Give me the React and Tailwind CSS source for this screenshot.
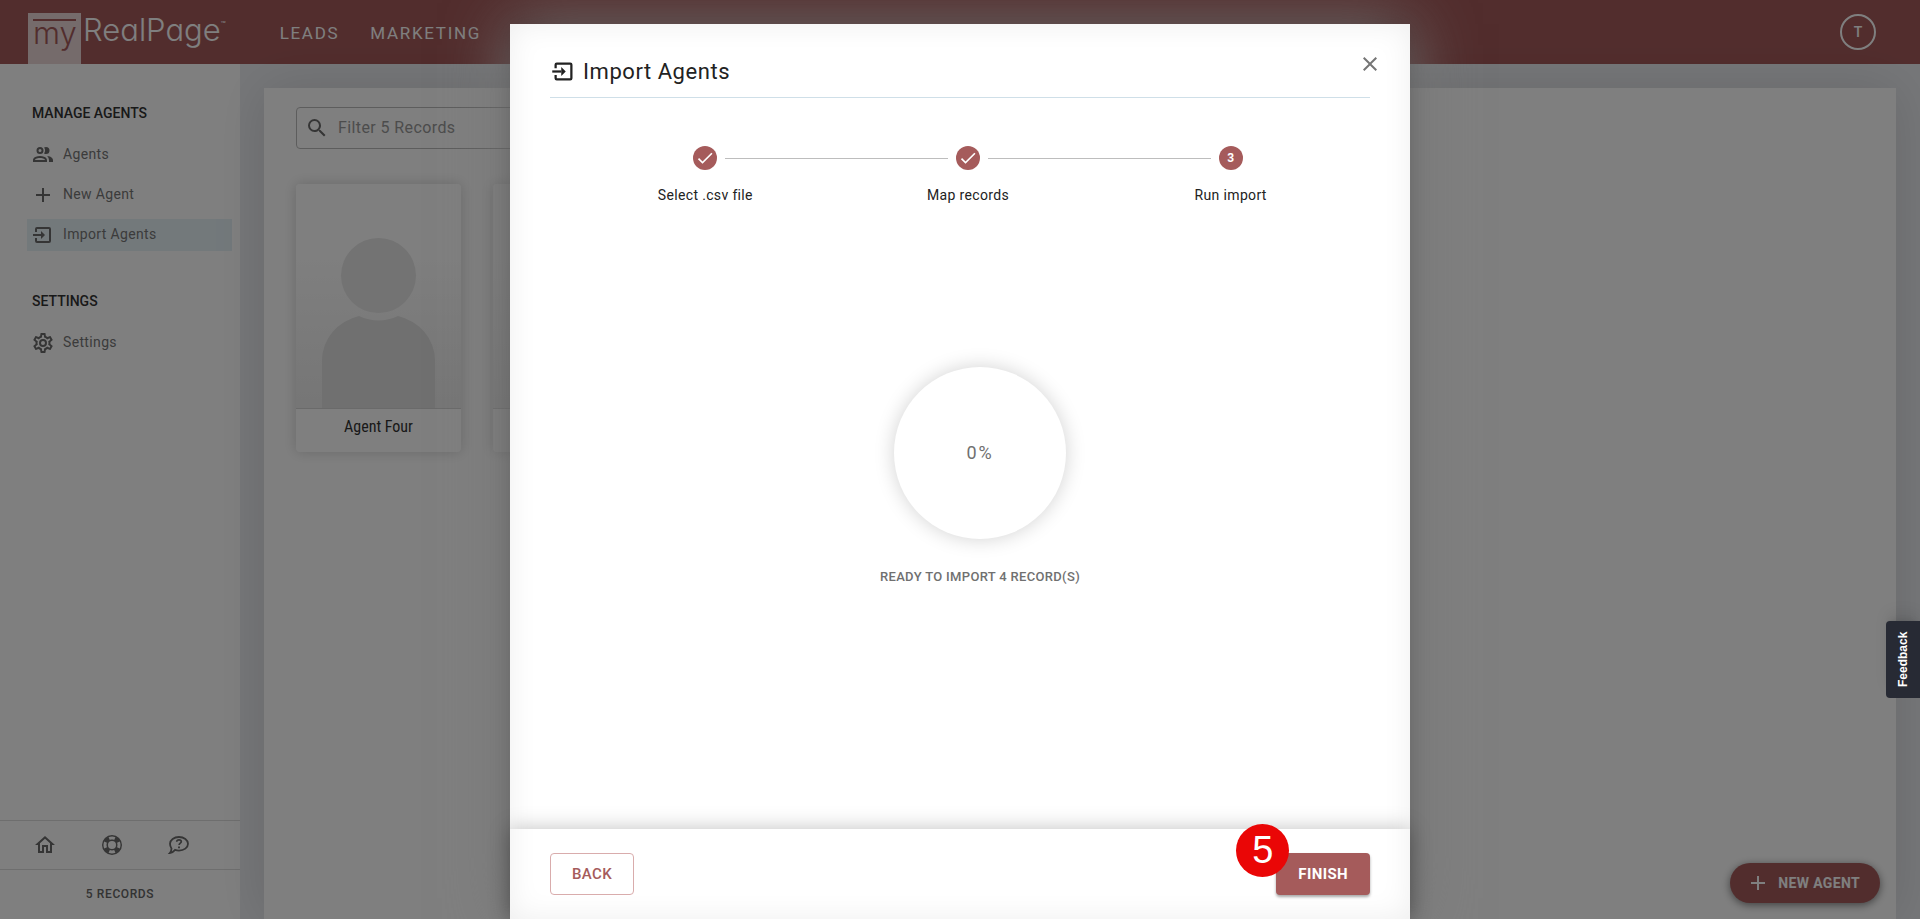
import { clsx } from 'clsx'

const paths = {
  agents: 'M13.07 10.41A5 5 0 0 0 13.07 4.59A3.39 3.39 0 0 1 15 4A3.5 3.5 0 0 1 15 11A3.39 3.39 0 0 1 13.07 10.41M5.5 7.5A3.5 3.5 0 1 1 9 11A3.5 3.5 0 0 1 5.5 7.5M7.5 7.5A1.5 1.5 0 1 0 9 6A1.5 1.5 0 0 0 7.5 7.5M16 17V19H2V17S2 13 9 13 16 17 16 17M14 17C13.86 16.22 12.67 15 9 15S4.07 16.31 4 17M15.95 13A5.32 5.32 0 0 1 18 17V19H22V17S22 13.37 15.94 13Z',
  plus: 'M19 13H13V19H11V13H5V11H11V5H13V11H19V13Z',
  cog: 'M12 8A4 4 0 0 1 16 12A4 4 0 0 1 12 16A4 4 0 0 1 8 12A4 4 0 0 1 12 8M12 10A2 2 0 0 0 10 12A2 2 0 0 0 12 14A2 2 0 0 0 14 12A2 2 0 0 0 12 10M10 22C9.75 22 9.54 21.82 9.5 21.58L9.13 18.93C8.5 18.68 7.96 18.34 7.44 17.94L4.95 18.95C4.73 19.03 4.46 18.95 4.34 18.73L2.34 15.27C2.21 15.05 2.27 14.78 2.46 14.63L4.57 12.97L4.5 12L4.57 11L2.46 9.37C2.27 9.22 2.21 8.95 2.34 8.73L4.34 5.27C4.46 5.05 4.73 4.96 4.95 5.05L7.44 6.05C7.96 5.66 8.5 5.32 9.13 5.07L9.5 2.42C9.54 2.18 9.75 2 10 2H14C14.25 2 14.46 2.18 14.5 2.42L14.87 5.07C15.5 5.32 16.04 5.66 16.56 6.05L19.05 5.05C19.27 4.96 19.54 5.05 19.66 5.27L21.66 8.73C21.79 8.95 21.73 9.22 21.54 9.37L19.43 11L19.5 12L19.43 13L21.54 14.63C21.73 14.78 21.79 15.05 21.66 15.27L19.66 18.73C19.54 18.95 19.27 19.04 19.05 18.95L16.56 17.95C16.04 18.34 15.5 18.68 14.87 18.93L14.5 21.58C14.46 21.82 14.25 22 14 22H10M11.25 4L10.88 6.61C9.68 6.86 8.62 7.5 7.85 8.39L5.44 7.35L4.69 8.65L6.8 10.2C6.4 11.37 6.4 12.64 6.8 13.8L4.68 15.36L5.43 16.66L7.86 15.62C8.63 16.5 9.68 17.14 10.87 17.38L11.24 20H12.76L13.13 17.39C14.32 17.14 15.37 16.5 16.14 15.62L18.57 16.66L19.32 15.36L17.2 13.81C17.6 12.64 17.6 11.37 17.2 10.2L19.31 8.65L18.56 7.35L16.15 8.39C15.38 7.5 14.32 6.86 13.12 6.62L12.75 4H11.25Z',
  magnify: 'M9.5 3A6.5 6.5 0 0 1 16 9.5C16 11.11 15.41 12.59 14.44 13.73L14.71 14H15.5L20.5 19L19 20.5L14 15.5V14.71L13.73 14.44C12.59 15.41 11.11 16 9.5 16A6.5 6.5 0 0 1 3 9.5A6.5 6.5 0 0 1 9.5 3M9.5 5C7 5 5 7 5 9.5C5 12 7 14 9.5 14C12 14 14 12 14 9.5C14 7 12 5 9.5 5Z',
  home: 'M12 5.69L17 10.19V18H15V12H9V18H7V10.19L12 5.69M12 3L2 12H5V20H11V14H13V20H19V12H22L12 3Z',
  lifebuoy: 'M19.79 15.41C20.74 13.24 20.74 10.75 19.79 8.59L17.05 9.83C17.65 11.21 17.65 12.78 17.06 14.17L19.79 15.41M15.42 4.21C13.25 3.26 10.76 3.26 8.59 4.21L9.83 6.94C11.22 6.35 12.79 6.35 14.18 6.95L15.42 4.21M4.21 8.58C3.26 10.76 3.26 13.24 4.21 15.42L6.95 14.17C6.35 12.79 6.35 11.21 6.95 9.82L4.21 8.58M8.59 19.79C10.76 20.74 13.25 20.74 15.42 19.78L14.18 17.05C12.8 17.65 11.22 17.65 9.84 17.06L8.59 19.79M12 2A10 10 0 0 1 22 12A10 10 0 0 1 12 22A10 10 0 0 1 2 12A10 10 0 0 1 12 2M12 8A4 4 0 0 0 8 12A4 4 0 0 0 12 16A4 4 0 0 0 16 12A4 4 0 0 0 12 8Z',
  close: 'M19 6.41L17.59 5L12 10.59L6.41 5L5 6.41L10.59 12L5 17.59L6.41 19L12 13.41L17.59 19L19 17.59L13.41 12L19 6.41Z',
  check: 'M21 7L9 19L3.5 13.5L4.91 12.09L9 16.17L19.59 5.59L21 7Z',
}

const Icon = ({ name, className = 'size-6' }) => (
  <svg viewBox="0 0 24 24" fill="currentColor" fillRule="evenodd" className={clsx('shrink-0', className)} aria-hidden="true">
    <path d={paths[name]} />
  </svg>
)

const ImportIcon = ({ className = 'size-6' }) => (
  <svg viewBox="0 0 24 24" fill="none" stroke="currentColor" strokeWidth="2" className={clsx('shrink-0', className)} aria-hidden="true">
    <path d="M5 9V6a1 1 0 0 1 1-1h12a1 1 0 0 1 1 1v12a1 1 0 0 1-1 1H6a1 1 0 0 1-1-1v-3" />
    <path d="M2 12h8" />
    <path d="M10 8l4 4-4 4z" fill="currentColor" stroke="none" />
  </svg>
)

const HelpIcon = () => (
  <svg viewBox="0 0 24 24" fill="none" stroke="currentColor" className="size-6" aria-hidden="true">
    <path d="M12 4c5 0 9 3 9 6.800s-4 6.800-9 6.800c-1.400 0-2.700-.2-3.900-.7C6.800 18.500 5 19.800 2.800 20c1-1.200 1.700-2.800 1.700-4.600C3.600 14.100 3 12.500 3 10.800 3 7 7 4 12 4z" strokeWidth="1.800" />
    <path d="M9.700 8.800c.1-1.200 1-1.900 2.300-1.900s2.300.7 2.300 1.800c0 1.400-2.200 1.600-2.200 3.300" strokeWidth="1.700" />
    <path d="M12 13.400v1.800" strokeWidth="1.900" />
  </svg>
)

const Header = () => (
  <header className="flex h-16 shrink-0 items-stretch bg-[#a55b5b] px-7 text-white">
    <a href="#home" className="flex font-[Inter,sans-serif] text-[31px] leading-9 font-light [font-feature-settings:'cv11']">
      <span className="mt-[13px] w-[53px] bg-[#ebd6d6] pt-1.5 text-center text-[#a55b5b]">
        <span className="mx-[5px] block border-t-2 border-[#a55b5b] leading-6">my</span>
      </span>
      <span className="pt-3 pl-[2px]">RealPage</span>
      <span className="pt-[18px] text-[8px] leading-3 font-normal">™</span>
    </a>
    <nav className="ml-[54px] flex items-center gap-[31px] pt-1 text-[17px] tracking-widest">
      <a href="#leads">LEADS</a>
      <a href="#marketing">MARKETING</a>
    </nav>
    <button type="button" className="mr-4 ml-auto size-9 self-center rounded-full border-2 border-white text-sm font-medium">
      T
    </button>
  </header>
)

const NavItem = ({ icon, label, active }) => (
  <a
    href="#nav"
    className={clsx('flex h-8 items-center gap-2 pl-1 text-sm tracking-wide text-[#777]', active && 'bg-[#e6f2f7]')}
  >
    <span className="text-[#6b6b6b]">{icon}</span>
    <span className="pb-0.5">{label}</span>
  </a>
)

const Sidebar = () => (
  <aside className="flex w-60 shrink-0 flex-col bg-white">
    <div className="flex-1 pt-[39px] pr-2 pl-[27px]">
      <h2 className="pl-[5px] text-sm font-medium text-[#333]">MANAGE AGENTS</h2>
      <div className="mt-4 flex flex-col gap-2">
        <NavItem icon={<Icon name="agents" />} label="Agents" />
        <NavItem icon={<Icon name="plus" />} label="New Agent" />
        <NavItem icon={<ImportIcon />} label="Import Agents" active />
      </div>
      <h2 className="mt-10 pl-[5px] text-sm font-medium text-[#333]">SETTINGS</h2>
      <div className="mt-4">
        <NavItem icon={<Icon name="cog" />} label="Settings" />
      </div>
    </div>
    <div className="grid h-[49px] grid-cols-3 place-items-center border-t border-[#ddd] pr-7 pl-3 text-[#6b6b6b]">
      <button type="button" aria-label="Home"><Icon name="home" /></button>
      <button type="button" aria-label="Support"><Icon name="lifebuoy" /></button>
      <button type="button" aria-label="Help"><HelpIcon /></button>
    </div>
    <div className="flex h-[50px] items-center justify-center border-t border-[#ddd] pb-0.5 text-xs font-medium tracking-wider text-[#666]">
      5 RECORDS
    </div>
  </aside>
)

const AgentCard = ({ name }) => (
  <div className="h-[268px] w-[165px] rounded bg-white shadow-[0_0_14px_rgba(0,0,0,0.18)]">
    <div className="h-[225px] rounded-t border-b border-[#d4d4d4] bg-linear-to-b from-white from-30% to-[#ececec]">
      <svg viewBox="0 0 165 224" className="h-56 w-full" aria-hidden="true">
        <circle cx="82.500" cy="91.500" r="37.500" fill="#e6e6e6" />
        <path d="M63 132a44.500 44.500 0 0 0 39 0a49 46 0 0 1 37 44v48H26v-48a49 46 0 0 1 37-44z" fill="#e0e0e0" />
      </svg>
    </div>
    <p className="pt-1.5 text-center font-['Roboto_Condensed',Roboto,sans-serif] text-base text-[#333]">{name}</p>
  </div>
)

const Records = () => (
  <main className="flex-1 bg-[#eceef2] px-6 pt-6">
    <div className="h-full bg-white px-8 pt-[19px] shadow-[0_0_50px_rgba(0,0,0,0.12)]">
      <label className="flex h-[42px] w-1/2 items-center gap-[9px] rounded border border-[#bbb] pl-2 text-[#6b6b6b]">
        <Icon name="magnify" />
        <input type="text" placeholder="Filter 5 Records" className="flex-1 text-base tracking-wide placeholder:text-[#999]" />
      </label>
      <div className="mt-[35px] flex gap-8">
        <AgentCard name="Agent Four" />
        <AgentCard />
      </div>
    </div>
  </main>
)

const steps = [
  { label: 'Select .csv file', done: true },
  { label: 'Map records', done: true },
  { label: 'Run import' },
]

const Stepper = () => (
  <ol className="mt-12 mr-2 ml-6 flex">
    {steps.map((step, i) => (
      <li key={step.label} className="flex-1">
        <div className="flex items-start gap-2">
          <span className={clsx('mt-3 h-px flex-1', i > 0 && 'bg-[#bdbdbd]')} />
          <span className="flex size-6 items-center justify-center rounded-full bg-[#a55b5b] text-xs font-bold text-white">
            {step.done ? <Icon name="check" className="size-5" /> : i + 1}
          </span>
          <span className={clsx('mt-3 h-px flex-1', i < steps.length - 1 && 'bg-[#bdbdbd]')} />
        </div>
        <p className="mt-[15px] text-center text-sm tracking-wide text-[#222]">{step.label}</p>
      </li>
    ))}
  </ol>
)

const ImportDialog = () => (
  <div
    role="dialog"
    aria-labelledby="import-title"
    className="relative flex w-[900px] flex-col bg-white shadow-[0_0_20px_rgba(0,0,0,0.15),0_0_60px_#757575]"
  >
    <div className="flex flex-1 flex-col px-10">
      <div className="flex h-[74px] items-center gap-1.5 border-b border-[#cfdfe8] pt-[22px] text-[#222]">
        <ImportIcon className="size-[27px]" />
        <h1 id="import-title" className="text-[22px] tracking-wide">Import Agents</h1>
        <button type="button" aria-label="Close" className="-mr-3 mb-4 ml-auto text-[#757575]">
          <Icon name="close" />
        </button>
      </div>
      <Stepper />
      <div className="mt-[162px] flex flex-col items-center pl-10 text-[#707070]">
        <div className="flex size-[172px] items-center justify-center rounded-full text-lg tracking-widest shadow-[0_0_20px_rgba(0,0,0,0.18)]">
          0%
        </div>
        <p className="mt-7 text-[13px] font-medium tracking-wide">READY TO IMPORT 4 RECORD(S)</p>
      </div>
    </div>
    <div className="flex h-[90px] items-start justify-between bg-white px-10 pt-6 shadow-[0_0_20px_rgba(0,0,0,0.25)]">
      <button type="button" className="h-[42px] rounded border border-[#d9acac] px-[21px] text-[15px] font-medium tracking-wide text-[#a55b5b]">
        BACK
      </button>
      <div className="relative">
        <button type="button" className="h-[42px] rounded bg-[#a55b5b] px-[22px] text-[15px] font-bold tracking-wide text-white shadow-[0_2px_3px_rgba(0,0,0,0.35)]">
          FINISH
        </button>
        <span className="absolute -top-[29px] -left-10 flex size-[53px] items-center justify-center rounded-full bg-[#ea0606] font-['Liberation_Sans',sans-serif] text-[38px] text-white">
          5
        </span>
      </div>
    </div>
    <div className="pointer-events-none absolute inset-0 shadow-[inset_0_0_30px_rgba(0,0,0,0.07)]" />
  </div>
)

const App = () => {
  return (
    <div className="relative flex min-h-screen flex-col overflow-hidden font-[Roboto,sans-serif]">
      <Header />
      <div className="flex flex-1">
        <Sidebar />
        <Records />
      </div>
      <button
        type="button"
        className="absolute right-10 bottom-4 flex h-10 items-center gap-2 rounded-full bg-[#a55b5b] pr-5 pl-4 text-sm font-bold tracking-wide text-white shadow-[0_2px_8px_rgba(0,0,0,0.5)]"
      >
        <Icon name="plus" />
        NEW AGENT
      </button>
      <div className="absolute inset-0 flex items-stretch justify-center bg-black/50 pt-6">
        <ImportDialog />
      </div>
      <button
        type="button"
        className="absolute right-0 bottom-[221px] flex h-[77px] w-[34px] rotate-180 items-center justify-center rounded-r bg-[#272a34] font-['Liberation_Sans',sans-serif] text-xs font-bold text-white shadow-lg [writing-mode:vertical-rl]"
      >
        Feedback
      </button>
    </div>
  )
}

export default App
